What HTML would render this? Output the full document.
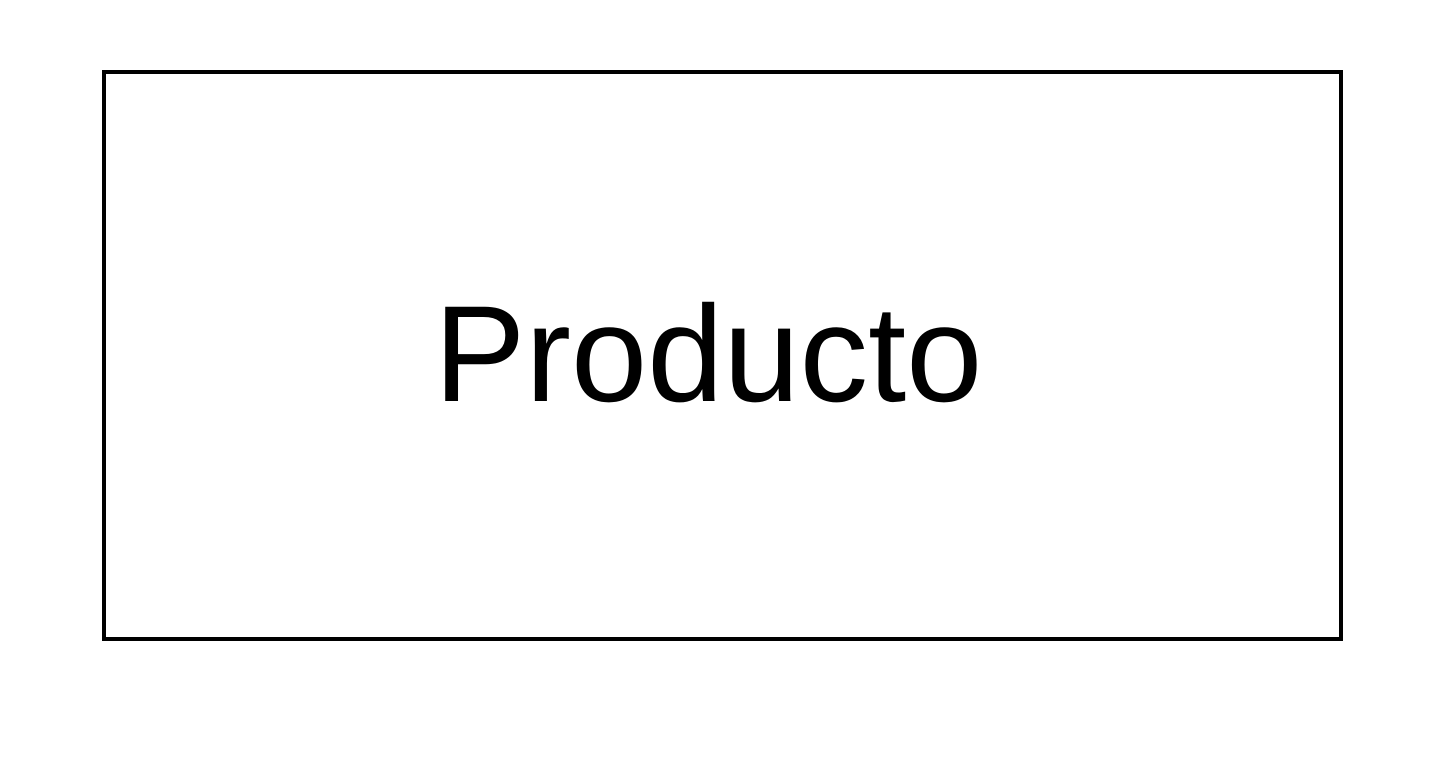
<!DOCTYPE html>
<html>
<head>
<meta charset="utf-8">
<style>
html,body{margin:0;padding:0;background:#fff;width:1440px;height:760px;overflow:hidden;}
</style>
</head>
<body>
<svg width="1440" height="760" xmlns="http://www.w3.org/2000/svg">
<rect x="0" y="0" width="1440" height="760" fill="#fff"/>
<rect x="104" y="72" width="1237" height="567" fill="none" stroke="#000" stroke-width="4"/>
<text x="434" y="401" font-family="Liberation Sans, sans-serif" font-size="137" fill="#000">Producto</text>
</svg>
</body>
</html>
